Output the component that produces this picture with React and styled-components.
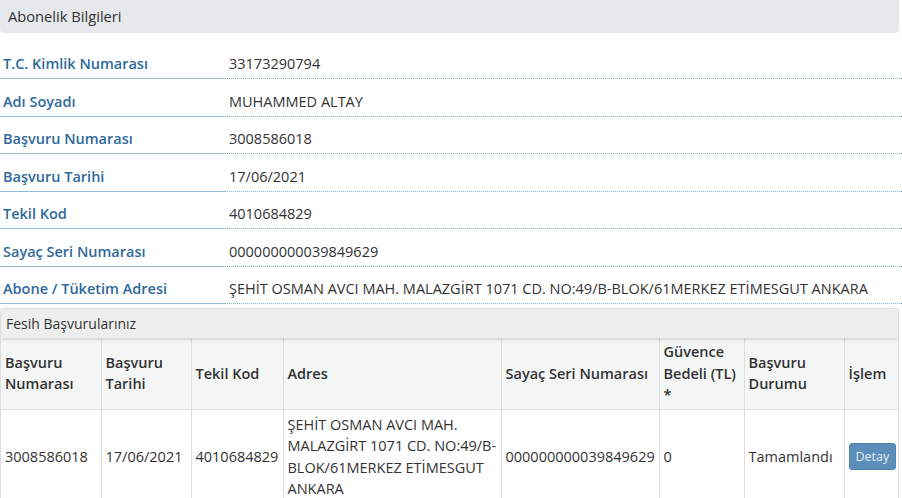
import styled, { createGlobalStyle } from "styled-components";

const GlobalStyle = createGlobalStyle`
  body {
    margin: 0;
    background: #fff;
    font-family: "Open Sans", "Noto Sans", sans-serif;
    font-size: 14.5px;
    color: #333;
  }
`;

const Page = styled.div`
  width: 902px;
`;

const PanelHead = styled.div`
  width: 899px;
  height: 33px;
  box-sizing: border-box;
  background: #e6e9ec;
  border-radius: 0 0 4px 4px;
  padding: 6px 8px;
  font-size: 14.7px;
  line-height: 20px;
  color: #333;
`;

const InfoList = styled.div`
  margin-top: 8.5px;
  display: grid;
  grid-template-columns: 225px 1fr;
`;

const Label = styled.div`
  height: 37.5px;
  box-sizing: border-box;
  display: flex;
  align-items: flex-end;
  padding: 0 0 4px 3px;
  font-weight: 600;
  color: #2f6a9c;
  border-bottom: 1px solid #8dbcda;
  line-height: 20px;
`;

const Value = styled.div`
  height: 37.5px;
  box-sizing: border-box;
  display: flex;
  align-items: flex-end;
  padding: 0 0 4px 4px;
  color: #333;
  border-bottom: 1px dotted #8aaec8;
  line-height: 20px;
  white-space: nowrap;
`;

const Panel = styled.div`
  width: 899px;
  margin-top: 4px;
  border: 1px solid #ddd;
  border-bottom: none;
  border-radius: 4px 4px 0 0;
  overflow: hidden;
  box-sizing: border-box;
`;

const PanelTitle = styled.div`
  height: 29px;
  box-sizing: border-box;
  background: #eeeeee;
  padding: 5px 5px;
  font-size: 14px;
  line-height: 19px;
  color: #333;
  box-shadow: 0 2px 3px rgba(0, 0, 0, 0.12);
  position: relative;
  z-index: 1;
`;

const Table = styled.table`
  width: 100%;
  border-collapse: collapse;
  table-layout: fixed;
  font-size: 14.5px;
  line-height: 21.5px;
`;

const Th = styled.th`
  text-align: left;
  font-weight: 600;
  color: #333;
  background: #f4f6f6;
  padding: 3px 4px 3px 4px;
  border-right: 1px solid #ddd;
  border-bottom: 1px solid #ddd;
  vertical-align: middle;
  height: 64px;
  &:last-child { border-right: none; }
`;

const Td = styled.td`
  padding: 4px 4px;
  border-right: 1px solid #ddd;
  vertical-align: middle;
  color: #333;
  &:last-child { border-right: none; }
`;

const DetailButton = styled.button`
  font-family: "Open Sans", "Noto Sans", sans-serif;
  font-size: 12.5px;
  line-height: 17px;
  padding: 4px 6px;
  background: #5b8eba;
  color: #e4ecf2;
  border: 1px solid #5283ae;
  border-radius: 3px;
  cursor: pointer;
`;

const info = [
  ["T.C. Kimlik Numarası", "33173290794"],
  ["Adı Soyadı", "MUHAMMED ALTAY"],
  ["Başvuru Numarası", "3008586018"],
  ["Başvuru Tarihi", "17/06/2021"],
  ["Tekil Kod", "4010684829"],
  ["Sayaç Seri Numarası", "000000000039849629"],
  ["Abone / Tüketim Adresi", "ŞEHİT OSMAN AVCI MAH. MALAZGİRT 1071 CD. NO:49/B-BLOK/61MERKEZ ETİMESGUT ANKARA"],
];

const columns = [
  { title: "Başvuru Numarası", width: 100 },
  { title: "Başvuru Tarihi", width: 90 },
  { title: "Tekil Kod", width: 92 },
  { title: "Adres", width: 218 },
  { title: "Sayaç Seri Numarası", width: 158 },
  { title: "Güvence Bedeli (TL) *", width: 85 },
  { title: "Başvuru Durumu", width: 100 },
  { title: "İşlem" },
];

export default function App() {
  return (
    <Page>
      <GlobalStyle />
      <PanelHead>Abonelik Bilgileri</PanelHead>
      <InfoList>
        {info.map(([label, value]) => (
          <>
            <Label key={label}>{label}</Label>
            <Value key={label + "_v"}>{value}</Value>
          </>
        ))}
      </InfoList>
      <Panel>
        <PanelTitle>Fesih Başvurularınız</PanelTitle>
        <Table>
          <colgroup>
            {columns.map((c, i) => (
              <col key={`col_${i}`} style={c.width ? { width: c.width } : undefined} />
            ))}
          </colgroup>
          <thead>
            <tr>
              {columns.map((c, i) => (
                <Th key={`th_${i}`}>{c.title}</Th>
              ))}
            </tr>
          </thead>
          <tbody>
            <tr>
              <Td>3008586018</Td>
              <Td>17/06/2021</Td>
              <Td>4010684829</Td>
              <Td>ŞEHİT OSMAN AVCI MAH. MALAZGİRT 1071 CD. NO:49/B-BLOK/61MERKEZ ETİMESGUT ANKARA</Td>
              <Td>000000000039849629</Td>
              <Td>0</Td>
              <Td>Tamamlandı</Td>
              <Td><DetailButton>Detay</DetailButton></Td>
            </tr>
          </tbody>
        </Table>
      </Panel>
    </Page>
  );
}
